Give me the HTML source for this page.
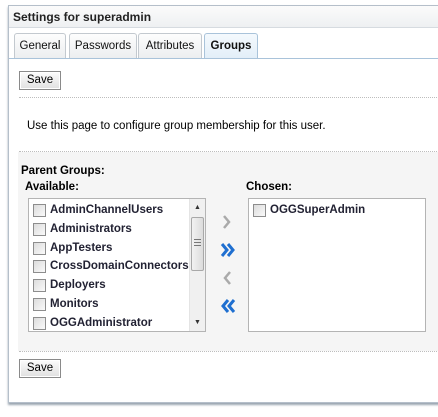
<!DOCTYPE html>
<html><head><style>
*{margin:0;padding:0;box-sizing:border-box}
body{width:438px;height:417px;background:#fff;font-family:"Liberation Sans",Arial,sans-serif;font-size:11px;color:#000;position:relative;overflow:hidden}
.abs{position:absolute}
.panel{left:8px;top:5px;width:440px;height:398px;border:1px solid #b5bfca;border-right:none;box-shadow:0 2px 2px #9aa5b0}
.title{left:9px;top:6px;width:430px;height:22px;background:linear-gradient(#fbfbfb,#eef0f2);border-bottom:1px solid #d6dbe0;font-weight:bold;font-size:12px;line-height:22px;padding-left:4px;color:#222}
.tab{top:33px;height:25px;border:1px solid #c3c9cf;border-bottom:none;border-radius:3px 3px 0 0;background:linear-gradient(#fdfdfd,#eceef0);text-align:center;line-height:24px;font-size:11.5px;color:#111}
.tab.sel{background:linear-gradient(#f4f9fd,#e2eef8);border-color:#a9c3da;font-weight:bold;height:26px}
.tabline{left:9px;top:58px;width:430px;height:1px;background:#a9c3da}
.btn{width:42px;height:19px;border:1px solid #8a8a8a;background:linear-gradient(#fcfcfc,#e0e0e0);text-align:center;line-height:17px;font-size:11.5px;box-shadow:inset 0 0 0 1px #fff}
.dot{height:1px;border-top:1px dotted #bdbdbd;left:19px;width:420px}
.grey{left:18px;top:152px;width:421px;height:199px;background:#f5f5f5}
.b{font-weight:bold}
.list{background:#fff;border:1px solid #b4b4b4}
.item{height:18.8px;line-height:19px;font-weight:bold;font-size:11.5px;color:#223;padding-left:21px;position:relative;white-space:nowrap}
.item:before{content:"";position:absolute;left:4px;top:3px;width:11px;height:11px;border:1px solid #8d8d8d;background:linear-gradient(135deg,#dcdcdc,#fafafa)}
</style></head><body>
<div class="abs panel"></div>
<div class="abs title">Settings for superadmin</div>
<div class="abs tab" style="left:14px;width:52px">General</div>
<div class="abs tab" style="left:69px;width:68px">Passwords</div>
<div class="abs tab" style="left:138px;width:64px">Attributes</div>
<div class="abs tab sel" style="left:204px;width:54px">Groups</div>
<div class="abs tabline"></div>
<div class="abs btn" style="left:19px;top:71px">Save</div>
<div class="abs dot" style="top:97px"></div>
<div class="abs" style="left:27px;top:120px;font-size:11.5px">Use this page to configure group membership for this user.</div>
<div class="abs dot" style="top:151px"></div>
<div class="abs grey"></div>
<div class="abs b" style="left:21px;top:165px;font-size:11.5px">Parent Groups:</div>
<div class="abs b" style="left:25px;top:181px;font-size:11.5px">Available:</div>
<div class="abs b" style="left:246px;top:181px;font-size:11.5px">Chosen:</div>
<div class="abs list" style="left:28px;top:198px;width:178px;height:134px;overflow:hidden">
 <div style="padding-top:2px">
 <div class="item">AdminChannelUsers</div>
 <div class="item">Administrators</div>
 <div class="item">AppTesters</div>
 <div class="item">CrossDomainConnectors</div>
 <div class="item">Deployers</div>
 <div class="item">Monitors</div>
 <div class="item">OGGAdministrator</div>
 </div>
 <div class="abs" style="left:160px;top:0;width:17px;height:132px;background:#f0f0f0;border-left:1px solid #e4e4e4"></div>
 <div class="abs" style="left:165px;top:5px;font-size:7px;color:#333">▲</div>
 <div class="abs" style="left:162px;top:18px;width:13px;height:54px;border:1px solid #a8a8a8;border-radius:2px;background:linear-gradient(90deg,#f2f2f2,#dcdcdc)"></div>
 <div class="abs" style="left:165px;top:40px;width:7px;height:7px;border-top:1px solid #777;border-bottom:1px solid #777"></div>
 <div class="abs" style="left:165px;top:43px;width:7px;height:1px;background:#777"></div>
 <div class="abs" style="left:165px;top:120px;font-size:7px;color:#333">▼</div>
</div>
<div class="abs list" style="left:248px;top:198px;width:178px;height:134px">
 <div style="padding-top:2px"><div class="item">OGGSuperAdmin</div></div>
</div>
<svg class="abs" style="left:218px;top:213px" width="20" height="105" viewBox="0 0 20 105">
 <path d="M6 3 L11 9 L6 15" fill="none" stroke="#aaa" stroke-width="2.5"/>
 <path d="M4 31 L9 37 L4 43 M10 31 L15 37 L10 43" fill="none" stroke="#1f6fd0" stroke-width="3"/>
 <path d="M12 59 L7 65 L12 71" fill="none" stroke="#aaa" stroke-width="2.5"/>
 <path d="M10 87 L5 93 L10 99 M16 87 L11 93 L16 99" fill="none" stroke="#1f6fd0" stroke-width="3"/>
</svg>
<div class="abs dot" style="top:351px"></div>
<div class="abs btn" style="left:19px;top:359px">Save</div>
</body></html>
